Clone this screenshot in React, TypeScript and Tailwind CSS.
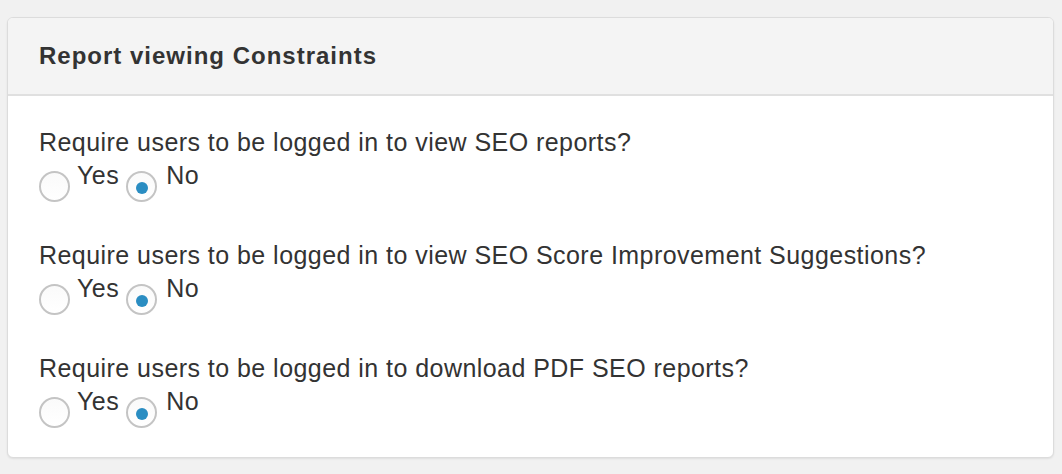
function Radio({ checked }: { checked?: boolean }) {
  return (
    <span className="relative top-[12px] inline-flex h-[31px] w-[31px] shrink-0 items-center justify-center rounded-full border-2 border-[#c4c4c4] bg-gradient-to-b from-[#fafafa] to-white">
      {checked && <span className="mt-[2px] h-[12px] w-[12px] rounded-full bg-[#2a8dc2]" />}
    </span>
  );
}

function Question({ label }: { label: string }) {
  return (
    <div className="mb-[47px] last:mb-[38px]">
      <p className="text-[25px] leading-[33px] tracking-[0.45px]">{label}</p>
      <div className="flex items-start text-[25px] leading-[33px] tracking-[0.45px]">
        <Radio />
        <span className="ml-[7px] mr-[7px]">Yes</span>
        <Radio checked />
        <span className="ml-[9px]">No</span>
      </div>
    </div>
  );
}

export default function App() {
  return (
    <div className="min-h-screen bg-[#f1f1f1] pl-[7px] pr-[8px] pt-[17px] text-[#333] [font-family:'Liberation_Sans',Arial,sans-serif]">
      <div className="overflow-hidden rounded-[6px] border border-[#dcdcdc] bg-white shadow-[0_1px_2px_rgba(0,0,0,0.08)]">
        <div className="flex h-[78px] items-center border-b-2 border-[#e0e0e0] bg-[#f4f4f4] pl-[31px]">
          <h2 className="text-[24px] font-bold tracking-[1px]">Report viewing Constraints</h2>
        </div>
        <div className="px-[31px] pt-[30px] pb-[1px]">
          <Question label="Require users to be logged in to view SEO reports?" />
          <Question label="Require users to be logged in to view SEO Score Improvement Suggestions?" />
          <Question label="Require users to be logged in to download PDF SEO reports?" />
        </div>
      </div>
    </div>
  );
}
